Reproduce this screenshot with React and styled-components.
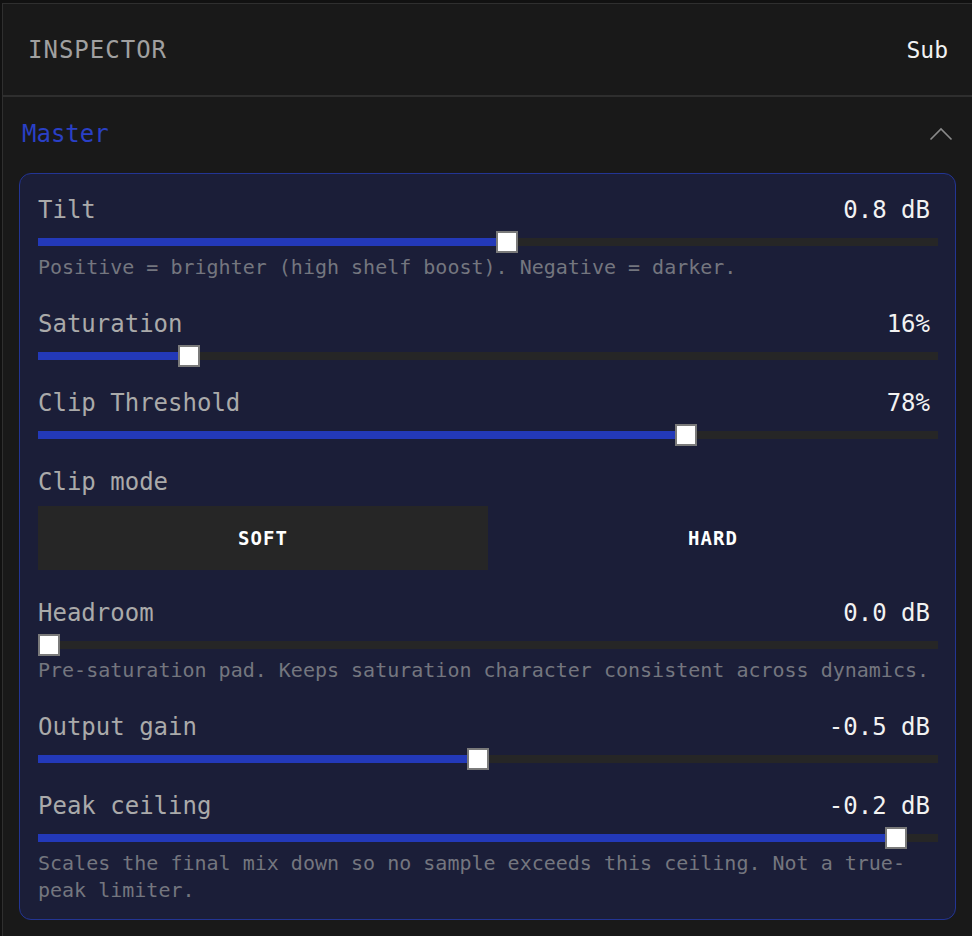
import React from 'react';
import styled, { createGlobalStyle } from 'styled-components';

const GlobalStyle = createGlobalStyle`
  html, body {
    margin: 0;
    padding: 0;
    background: #111111;
  }
  body {
    font-family: "DejaVu Sans Mono", "Liberation Mono", monospace;
  }
`;

const Panel = styled.div`
  margin: 3px 0 0 2px;
  min-height: 933px;
  background: #191919;
  border-top: 1px solid #2f2f2f;
  border-left: 1px solid #2f2f2f;
  box-sizing: border-box;
`;

const Header = styled.div`
  display: flex;
  align-items: center;
  justify-content: space-between;
  height: 91px;
  padding: 0 24px 0 25px;
  border-bottom: 2px solid #2e2e2e;
`;

const Title = styled.div`
  font-size: 24px;
  letter-spacing: 1px;
  color: #a0a0a0;
`;

const Mode = styled.div`
  font-size: 23px;
  color: #f2f2f2;
`;

const Section = styled.div`
  padding: 22px 16px 0 16px;
`;

const SectionHead = styled.div`
  display: flex;
  align-items: center;
  justify-content: space-between;
  height: 30px;
  padding: 0 3px;
  margin-bottom: 24px;
`;

const SectionName = styled.div`
  font-size: 24px;
  color: #2a40c6;
`;

const Card = styled.div`
  display: flex;
  flex-direction: column;
  gap: 28px;
  background: #1b1e38;
  border: 1px solid #233594;
  border-radius: 12px;
  padding: 21px 17px 15px 18px;
`;

const Field = styled.div`
  display: flex;
  flex-direction: column;
`;

const FieldHead = styled.div`
  display: flex;
  align-items: center;
  justify-content: space-between;
  height: 30px;
  font-size: 24px;
`;

const Label = styled.span`
  color: #aaaaaa;
`;

const Value = styled.span`
  color: #f2f2f2;
  padding-right: 8px;
`;

const Track = styled.div`
  position: relative;
  height: 8px;
  margin-top: 13px;
  background: #262626;
`;

const Fill = styled.div`
  height: 100%;
  background: #2339b9;
`;

const Thumb = styled.div`
  position: absolute;
  top: 50%;
  width: 22px;
  height: 22px;
  margin-top: -11px;
  box-sizing: border-box;
  background: #ffffff;
  border: 2px solid #7a7a7a;
`;

const Desc = styled.div`
  margin-top: 8px;
  font-size: 20px;
  line-height: 27px;
  color: #74767f;
`;

const Segments = styled.div`
  display: grid;
  grid-template-columns: 1fr 1fr;
  margin-top: 9px;
`;

const Segment = styled.button`
  height: 64px;
  border: none;
  background: ${(p) => (p.$active ? '#262626' : 'transparent')};
  color: #ffffff;
  font-family: "DejaVu Sans Mono", "Liberation Mono", monospace;
  font-weight: bold;
  font-size: 19px;
  letter-spacing: 1px;
  cursor: pointer;
`;

const THUMB = 22;

const Slider = ({ frac }) => {
  const center = `calc(${THUMB / 2}px + (100% - ${THUMB}px) * ${frac})`;
  return (
    <Track>
      <Fill style={{ width: center }} />
      <Thumb style={{ left: `calc(${center} - ${THUMB / 2}px)` }} />
    </Track>
  );
};

const fields = [
  { label: 'Tilt', value: '0.8 dB', frac: 0.522, desc: 'Positive = brighter (high shelf boost). Negative = darker.' },
  { label: 'Saturation', value: '16%', frac: 0.16 },
  { label: 'Clip Threshold', value: '78%', frac: 0.725 },
  { clipMode: true },
  { label: 'Headroom', value: '0.0 dB', frac: 0, desc: 'Pre-saturation pad. Keeps saturation character consistent across dynamics.' },
  { label: 'Output gain', value: '-0.5 dB', frac: 0.489 },
  { label: 'Peak ceiling', value: '-0.2 dB', frac: 0.965, desc: 'Scales the final mix down so no sample exceeds this ceiling. Not a true-peak limiter.' },
];

const ChevronUp = () => (
  <svg width="24" height="14" viewBox="0 0 24 14" fill="none">
    <polyline points="1.5,12.5 12,2 22.5,12.5" stroke="#8a8a8a" strokeWidth="1.6" />
  </svg>
);

export default function App() {
  return (
    <>
      <GlobalStyle />
      <Panel>
        <Header>
          <Title>INSPECTOR</Title>
          <Mode>Sub</Mode>
        </Header>
        <Section>
          <SectionHead>
            <SectionName>Master</SectionName>
            <ChevronUp />
          </SectionHead>
          <Card>
            {fields.map((f, i) =>
              f.clipMode ? (
                <Field key={i}>
                  <FieldHead>
                    <Label>Clip mode</Label>
                  </FieldHead>
                  <Segments>
                    <Segment $active>SOFT</Segment>
                    <Segment>HARD</Segment>
                  </Segments>
                </Field>
              ) : (
                <Field key={i}>
                  <FieldHead>
                    <Label>{f.label}</Label>
                    <Value>{f.value}</Value>
                  </FieldHead>
                  <Slider frac={f.frac} />
                  {f.desc && <Desc>{f.desc}</Desc>}
                </Field>
              )
            )}
          </Card>
        </Section>
      </Panel>
    </>
  );
}
